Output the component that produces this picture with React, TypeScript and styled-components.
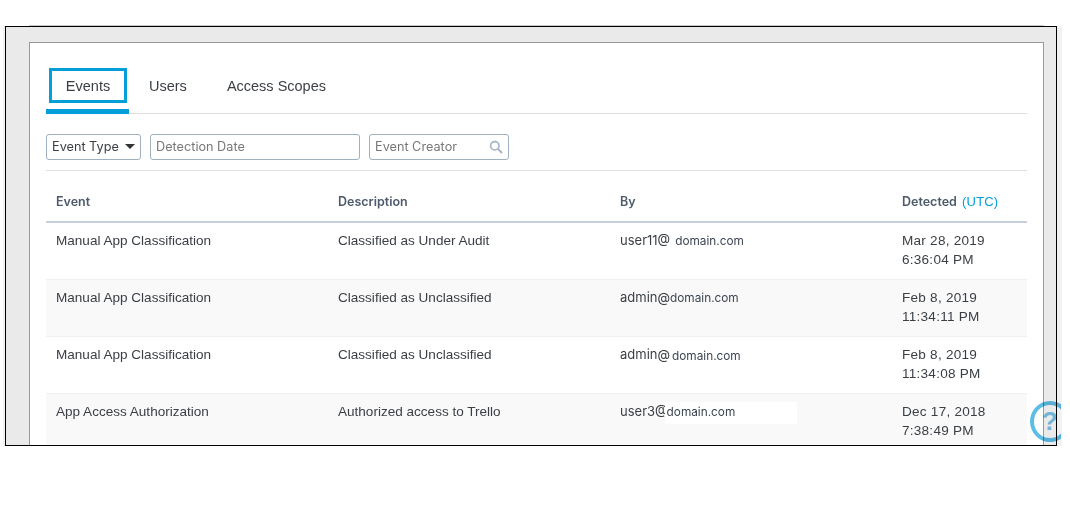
import React from 'react';
import styled, { createGlobalStyle } from 'styled-components';

const GlobalStyle = createGlobalStyle`
  html, body {
    margin: 0;
    padding: 0;
    background: #fff;
    font-family: "Liberation Sans", Arial, sans-serif;
    color: #3a3f45;
  }
`;

const rows = [
  { event: 'Manual App Classification', description: 'Classified as Under Audit', user: 'user11@', domain: 'domain.com', gap: 5, date: 'Mar 28, 2019', time: '6:36:04 PM' },
  { event: 'Manual App Classification', description: 'Classified as Unclassified', user: 'admin@', domain: 'domain.com', gap: 0, date: 'Feb 8, 2019', time: '11:34:11 PM' },
  { event: 'Manual App Classification', description: 'Classified as Unclassified', user: 'admin@', domain: 'domain.com', gap: 2, drop: true, date: 'Feb 8, 2019', time: '11:34:08 PM' },
  { event: 'App Access Authorization', description: 'Authorized access to Trello', user: 'user3@', domain: 'domain.com', gap: -3, masked: true, date: 'Dec 17, 2018', time: '7:38:49 PM' },
];

const App = () => {
  return (
    <Page>
      <GlobalStyle />
      <TopEdge />
      <Frame>
        <Panel>
          <Tabs>
            <Tab $active><TabFocus>Events</TabFocus></Tab>
            <Tab><TabLabel>Users</TabLabel></Tab>
            <Tab><TabLabel>Access Scopes</TabLabel></Tab>
          </Tabs>

          <Filters>
            <DropdownButton>
              Event Type
              <Caret />
            </DropdownButton>
            <DateField>Detection Date</DateField>
            <SearchField>
              Event Creator
              <svg width="14" height="14" viewBox="0 0 14 14" fill="none" stroke="#a3b3c4" strokeWidth="1.6">
                <circle cx="5.8" cy="5.8" r="4.2" />
                <path d="M8.9 8.9 L13 13" strokeWidth="2" />
              </svg>
            </SearchField>
          </Filters>

          <HeadRow>
            <HeadCell>Event</HeadCell>
            <HeadCell>Description</HeadCell>
            <HeadCell>By</HeadCell>
            <HeadCell>Detected <Utc>(UTC)</Utc></HeadCell>
          </HeadRow>

          {rows.map((row, i) => (
            <Row key={i} $striped={i % 2 === 1}>
              <Cell>{row.event}</Cell>
              <Cell>{row.description}</Cell>
              <EmailCell>
                {row.user}
                <Domain $gap={row.gap} $drop={row.drop} $masked={row.masked}>{row.domain}</Domain>
              </EmailCell>
              <DateCell>
                {row.date}
                <br />
                {row.time}
              </DateCell>
            </Row>
          ))}
        </Panel>
        <HelpBadge>?</HelpBadge>
      </Frame>
    </Page>
  );
};

const Page = styled.div`
  width: 1070px;
  height: 510px;
  padding: 25px 0 0 5px;
  box-sizing: border-box;
  overflow: hidden;
`;

const TopEdge = styled.div`
  width: 1015px;
  height: 1px;
  margin-left: 24px;
  background: #c8c8c8;
`;

const Frame = styled.div`
  position: relative;
  box-sizing: border-box;
  width: 1052px;
  height: 420px;
  padding: 16px 13px 0 24px;
  background: #eaeaea;
  box-shadow: -2px 0 0 #f2f2f2, 5px 0 0 #f2f2f2;

  &::after {
    content: '';
    position: absolute;
    inset: 0;
    border: 1px solid #000;
    pointer-events: none;
  }
`;

const Panel = styled.div`
  box-sizing: border-box;
  height: 403px;
  padding: 25px 16px 0;
  border: 1px solid #999;
  border-bottom: none;
  background: #fff;
  overflow: hidden;
`;

const Tabs = styled.div`
  display: flex;
  align-items: flex-start;
  box-sizing: border-box;
  height: 46px;
  border-bottom: 1px solid #dfdfdf;
`;

const Tab = styled.div<{ $active?: boolean }>`
  height: 41px;
  padding: ${(p) => (p.$active ? '0 2px 0 3px' : '0')};
  font-size: 14.5px;
  color: #3a3f45;
  border-bottom: 5px solid ${(p) => (p.$active ? '#049fd9' : 'transparent')};
`;

const TabFocus = styled.div`
  box-sizing: border-box;
  width: 78px;
  height: 35px;
  border: 3px solid #049fd9;
  text-align: center;
  line-height: 31px;
`;

const TabLabel = styled.div`
  height: 35px;
  padding: 0 20px;
  line-height: 37px;
`;

const Filters = styled.div`
  display: flex;
  gap: 9px;
  height: 57px;
  padding-top: 20px;
  box-sizing: border-box;
  border-bottom: 1px solid #dfdfdf;
  font-family: Inter, "Liberation Sans", sans-serif;
  font-size: 12.7px;
`;

const FilterBox = styled.div`
  box-sizing: border-box;
  display: flex;
  align-items: center;
  height: 26px;
  padding: 0 5px 2px;
  border: 1px solid #9fb0c0;
  border-radius: 3px;
  white-space: nowrap;
`;

const DropdownButton = styled(FilterBox)`
  width: 95px;
  justify-content: space-between;
  color: #3a3f45;
`;

const Caret = styled.span`
  width: 0;
  height: 0;
  border-left: 5px solid transparent;
  border-right: 5px solid transparent;
  border-top: 5px solid #333;
`;

const DateField = styled(FilterBox)`
  width: 210px;
  color: #777;
`;

const SearchField = styled(FilterBox)`
  width: 140px;
  justify-content: space-between;
  color: #777;

  svg {
    margin-top: 2px;
  }
`;

const HeadRow = styled.div`
  display: grid;
  grid-template-columns: 282px 282px 282px 135px;
  box-sizing: border-box;
  height: 52px;
  padding-top: 22px;
  line-height: 17px;
  border-bottom: 2px solid #c6d0dc;
`;

const HeadCell = styled.div`
  padding-left: 10px;
  font-family: Inter, "Liberation Sans", sans-serif;
  font-size: 12.5px;
  font-weight: 600;
  color: #4d5a6b;
  white-space: nowrap;
`;

const Utc = styled.span`
  margin-left: 2px;
  font-family: "Liberation Sans", sans-serif;
  font-size: 13px;
  font-weight: 400;
  letter-spacing: 0.2px;
  color: #049fd9;
`;

const Row = styled.div<{ $striped: boolean }>`
  display: grid;
  grid-template-columns: 282px 282px 282px 135px;
  box-sizing: border-box;
  height: 57px;
  padding-top: 8px;
  border-bottom: 1px solid #eef0f3;
  background: ${(p) => (p.$striped ? '#f9f9f9' : '#fff')};
  font-size: 13.55px;
  line-height: 19px;
  color: #3a3f45;
  &:last-child {
    background: #f9f9f9;
  }
`;

const Cell = styled.div`
  padding-left: 10px;
  white-space: nowrap;
`;

const EmailCell = styled(Cell)`
  font-family: Inter, "Liberation Sans", sans-serif;
  font-size: 13px;
`;

const DateCell = styled(Cell)`
  letter-spacing: 0.25px;
`;

const Domain = styled.span<{ $gap: number; $drop?: boolean; $masked?: boolean }>`
  margin-left: ${(p) => p.$gap}px;
  font-size: 11.8px;
  color: #3c4552;
  vertical-align: ${(p) => (p.$drop ? '-1px' : 'baseline')};
  ${(p) =>
    p.$masked
      ? `display: inline-block;
         box-sizing: border-box;
         width: 132px;
         height: 22px;
         padding-left: 2px;
         line-height: 20px;
         background: #fff;
         vertical-align: top;`
      : ''}
`;

const HelpBadge = styled.div`
  position: absolute;
  left: 1025px;
  top: 375px;
  box-sizing: border-box;
  width: 40px;
  height: 41px;
  border: 4px solid #5cbde6;
  border-radius: 50%;
  clip-path: inset(0 9px 0 0);
  mix-blend-mode: multiply;
  text-align: center;
  font-size: 26px;
  font-weight: 700;
  line-height: 33px;
  color: #7cc6ea;
`;

export default App;
